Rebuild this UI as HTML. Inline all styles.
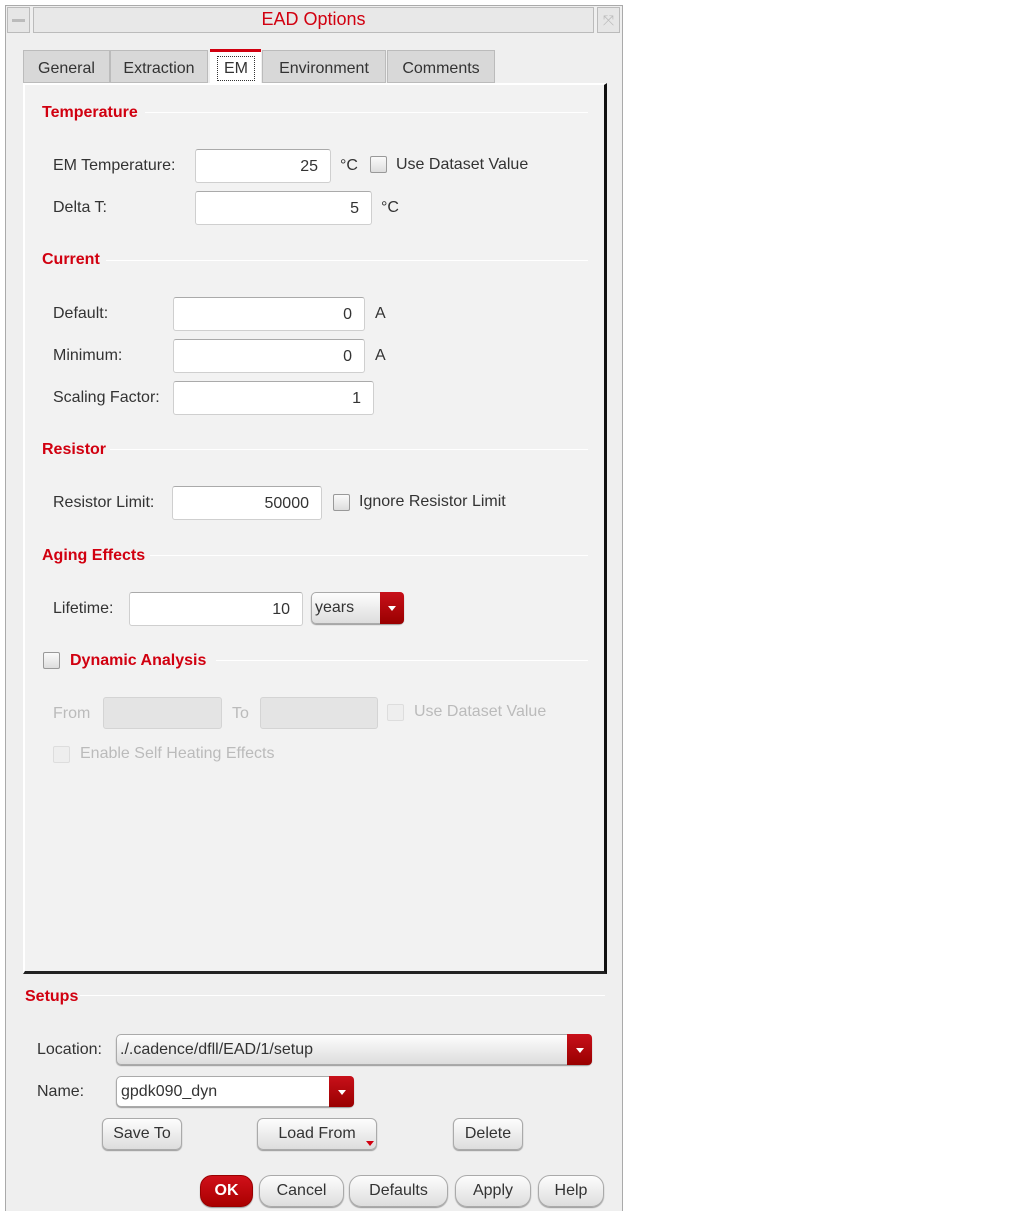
<!DOCTYPE html>
<html><head><meta charset="utf-8"><style>
body{margin:0;width:1013px;height:1211px;background:#fff;position:relative;overflow:hidden;font-family:"Liberation Sans","DejaVu Sans",sans-serif;font-size:16px;color:#333}
div,span{position:absolute;box-sizing:border-box}
.t{white-space:nowrap;line-height:20px}
.h{color:#d10010;font-weight:bold;font-size:16px}
.ln{height:1px;background:#ccc;border-bottom:1px solid #fff}
.in{background:#fff;border:1px solid #cfcfcf;border-top-color:#aaa;border-radius:3px;text-align:right;padding-right:12px;line-height:33px}
.cb{width:17px;height:17px;border:1px solid #999;background:linear-gradient(#fafafa,#ddd);border-radius:2px}
.btn{border:1px solid #aaa;border-radius:6px;background:linear-gradient(#fdfdfd,#ddd);text-align:center;line-height:30px;box-shadow:0 1px 1px #999}
.dd{background:linear-gradient(#c8101a,#900);border-radius:0 4px 4px 0}
.dd:after{content:"";position:absolute;left:50%;top:50%;margin:-2px 0 0 -4px;border:4px solid transparent;border-top:5px solid #fff;border-bottom:0}
.g{color:#bbb}
</style></head><body>
<div style="left:5px;top:5px;width:618px;height:1206px;background:#efefef;border:1px solid #aaa;border-bottom:none"></div>
<div style="left:7px;top:7px;width:23px;height:26px;border:1px solid #bbb;background:#e6e6e6"></div>
<div style="left:12px;top:19px;width:13px;height:3px;background:#bbb"></div>
<div style="left:33px;top:7px;width:561px;height:26px;border:1px solid #bbb;background:#e8e8e8"></div>
<div class="t" style="left:33px;top:9px;width:561px;text-align:center;color:#d10010;font-size:18px">EAD Options</div>
<div style="left:597px;top:7px;width:23px;height:26px;border:1px solid #bbb;background:#e6e6e6;color:#bbb;font-size:14px;text-align:center;line-height:24px">⤧</div>
<div class="t" style="left:23px;top:50px;width:87px;height:33px;background:#d8d8d8;border:1px solid #bbb;text-align:center;line-height:36px">General</div>
<div class="t" style="left:110px;top:50px;width:98px;height:33px;background:#d8d8d8;border:1px solid #bbb;text-align:center;line-height:36px">Extraction</div>
<div style="left:210px;top:49px;width:51px;height:35px;background:#fff;border-top:3px solid #d10010"></div>
<div class="t" style="left:217px;top:56px;width:38px;height:25px;border:1px dotted #333;text-align:center;line-height:24px">EM</div>
<div class="t" style="left:262px;top:50px;width:124px;height:33px;background:#d8d8d8;border:1px solid #bbb;text-align:center;line-height:36px">Environment</div>
<div class="t" style="left:387px;top:50px;width:108px;height:33px;background:#d8d8d8;border:1px solid #bbb;text-align:center;line-height:36px">Comments</div>
<div style="left:23px;top:83px;width:584px;height:891px;background:#f2f2f2;border-left:2px solid #fff;border-top:2px solid #fff;border-right:3px solid #111;border-bottom:3px solid #222"></div>
<div class="t h" style="left:42px;top:103px">Temperature</div>
<div class="ln" style="left:145px;top:112px;width:443px"></div>
<div class="t" style="left:53px;top:156px">EM Temperature:</div>
<div class="in" style="left:195px;top:149px;width:136px;height:34px">25</div>
<div class="t" style="left:340px;top:156px">°C</div>
<div class="cb" style="left:370px;top:156px"></div>
<div class="t" style="left:396px;top:155px">Use Dataset Value</div>
<div class="t" style="left:53px;top:198px">Delta T:</div>
<div class="in" style="left:195px;top:191px;width:177px;height:34px">5</div>
<div class="t" style="left:381px;top:198px">°C</div>
<div class="t h" style="left:42px;top:250px">Current</div>
<div class="ln" style="left:106px;top:260px;width:482px"></div>
<div class="t" style="left:53px;top:304px">Default:</div>
<div class="in" style="left:173px;top:297px;width:192px;height:34px">0</div>
<div class="t" style="left:375px;top:304px">A</div>
<div class="t" style="left:53px;top:346px">Minimum:</div>
<div class="in" style="left:173px;top:339px;width:192px;height:34px">0</div>
<div class="t" style="left:375px;top:346px">A</div>
<div class="t" style="left:53px;top:388px">Scaling Factor:</div>
<div class="in" style="left:173px;top:381px;width:201px;height:34px">1</div>
<div class="t h" style="left:42px;top:440px">Resistor</div>
<div class="ln" style="left:110px;top:449px;width:478px"></div>
<div class="t" style="left:53px;top:493px">Resistor Limit:</div>
<div class="in" style="left:172px;top:486px;width:150px;height:34px">50000</div>
<div class="cb" style="left:333px;top:494px"></div>
<div class="t" style="left:359px;top:492px">Ignore Resistor Limit</div>
<div class="t h" style="left:42px;top:546px">Aging Effects</div>
<div class="ln" style="left:150px;top:555px;width:438px"></div>
<div class="t" style="left:53px;top:599px">Lifetime:</div>
<div class="in" style="left:129px;top:592px;width:174px;height:34px">10</div>
<div class="btn" style="left:311px;top:592px;width:93px;height:32px;text-align:left;padding-left:3px;border-radius:5px">years</div>
<div class="dd" style="left:380px;top:592px;width:24px;height:32px"></div>
<div class="cb" style="left:43px;top:652px"></div>
<div class="t h" style="left:70px;top:651px">Dynamic Analysis</div>
<div class="ln" style="left:216px;top:660px;width:372px"></div>
<div class="t g" style="left:53px;top:704px">From</div>
<div style="left:103px;top:697px;width:119px;height:32px;background:#e4e4e4;border:1px solid #d4d4d4;border-radius:3px"></div>
<div class="t g" style="left:232px;top:704px">To</div>
<div style="left:260px;top:697px;width:118px;height:32px;background:#e4e4e4;border:1px solid #d4d4d4;border-radius:3px"></div>
<div class="cb" style="left:387px;top:704px;border-color:#ddd;background:#eee"></div>
<div class="t g" style="left:414px;top:702px">Use Dataset Value</div>
<div class="cb" style="left:53px;top:746px;border-color:#ddd;background:#eee"></div>
<div class="t g" style="left:80px;top:744px">Enable Self Heating Effects</div>
<div class="t h" style="left:25px;top:987px">Setups</div>
<div class="ln" style="left:80px;top:995px;width:525px"></div>
<div class="t" style="left:37px;top:1040px">Location:</div>
<div class="btn" style="left:116px;top:1034px;width:476px;height:31px;text-align:left;padding-left:3px;border-radius:5px;line-height:30px">./.cadence/dfll/EAD/1/setup</div>
<div class="dd" style="left:567px;top:1034px;width:25px;height:31px"></div>
<div class="t" style="left:37px;top:1082px">Name:</div>
<div class="btn" style="left:116px;top:1076px;width:238px;height:31px;text-align:left;padding-left:4px;border-radius:5px;background:#fff">gpdk090_dyn</div>
<div class="dd" style="left:329px;top:1076px;width:25px;height:31px"></div>
<div class="btn" style="left:102px;top:1118px;width:80px;height:32px">Save To</div>
<div class="btn" style="left:257px;top:1118px;width:120px;height:32px">Load From</div>
<div style="left:366px;top:1141px;border:4px solid transparent;border-top:5px solid #d10010"></div>
<div class="btn" style="left:453px;top:1118px;width:70px;height:32px">Delete</div>
<div class="btn" style="left:200px;top:1175px;width:53px;height:32px;background:linear-gradient(#d0101a,#a00);color:#fff;font-weight:bold;border-color:#900;border-radius:12px">OK</div>
<div class="btn" style="left:259px;top:1175px;width:85px;height:32px;border-radius:12px">Cancel</div>
<div class="btn" style="left:349px;top:1175px;width:99px;height:32px;border-radius:12px">Defaults</div>
<div class="btn" style="left:455px;top:1175px;width:76px;height:32px;border-radius:12px">Apply</div>
<div class="btn" style="left:538px;top:1175px;width:66px;height:32px;border-radius:12px">Help</div>
</body></html>
